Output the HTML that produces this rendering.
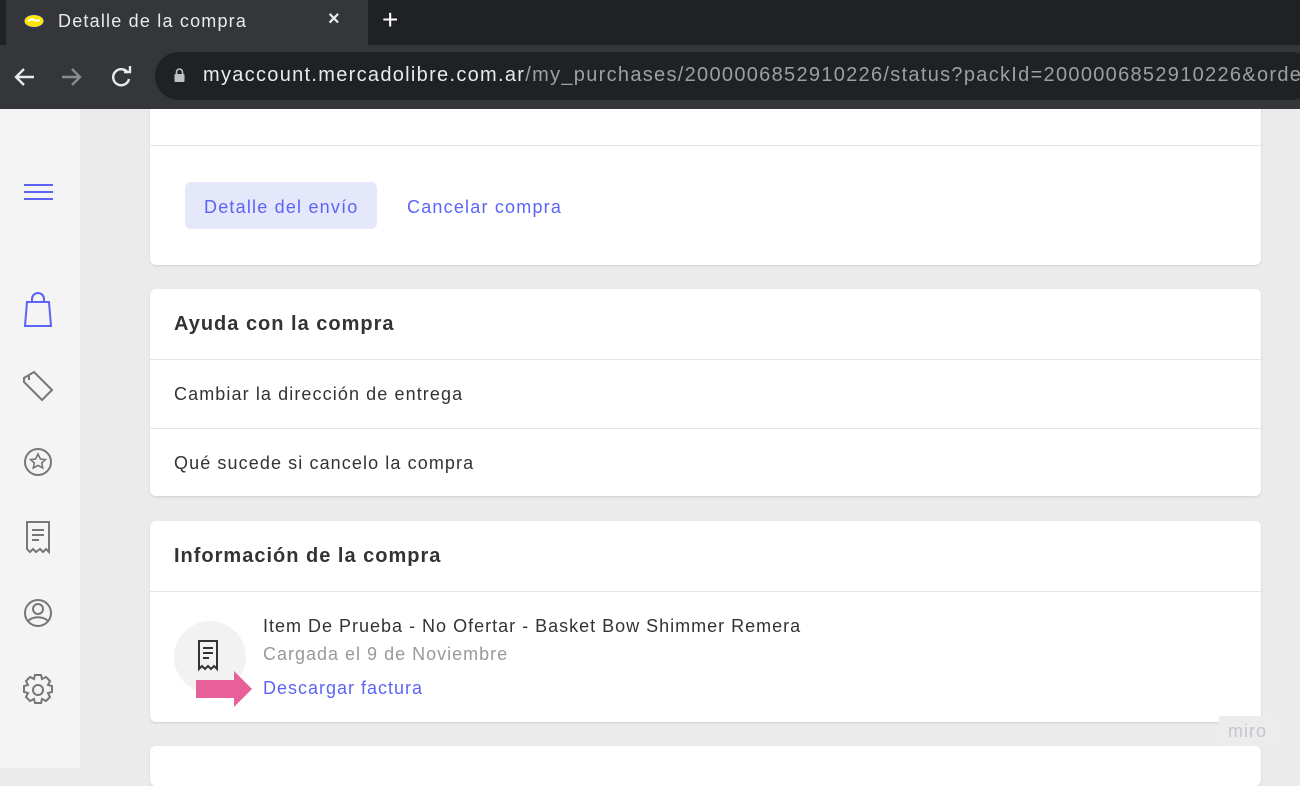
<!DOCTYPE html>
<html><head><meta charset="utf-8"><style>
*{margin:0;padding:0;box-sizing:border-box}
body{width:1300px;height:768px;overflow:hidden;background:#ebebeb;font-family:"Liberation Sans",sans-serif;position:relative}
.tabbar{position:absolute;left:0;top:0;width:1300px;height:45px;background:#202124;z-index:5}
.tab{position:absolute;left:6px;top:0;width:362px;height:45px;background:#35363a;z-index:5}
.toolbar{position:absolute;left:0;top:45px;width:1300px;height:64px;background:#35363a;z-index:5}
.omni{position:absolute;left:155px;top:52px;width:1160px;height:48px;background:#202124;border-radius:24px;z-index:6}
.hi{z-index:7!important}
.side{position:absolute;left:0;top:109px;width:80px;height:659px;background:#f4f4f4}
.card{position:absolute;left:150px;width:1111px;background:#fff;border-radius:6px;box-shadow:0 1px 2px rgba(0,0,0,.12)}
.t{position:absolute;color:#333;white-space:nowrap;letter-spacing:1px}
.hr{position:absolute;left:0;right:0;height:1px;background:#e5e5e5}
</style></head><body>
<div class="tabbar"></div>
<div class="tab"></div>
<svg class="hi" style="position:absolute;left:22px;top:12px;z-index:7" width="24" height="18"><ellipse cx="12" cy="9" rx="11" ry="7.5" fill="#2d3277"/><ellipse cx="12" cy="9" rx="9.5" ry="6" fill="#ffe600"/><path d="M6 9 L10 7 L14 9 L18 8" stroke="#fff" stroke-width="2" fill="none"/></svg>
<div class="t hi" style="left:58px;top:11px;font-size:18px;color:#e8eaed;letter-spacing:1.2px">Detalle de la compra</div>
<div class="t hi" style="left:328px;top:8px;font-size:20px;color:#e8eaed;font-weight:bold">×</div>
<div class="t hi" style="left:382px;top:4px;font-size:28px;color:#fff">+</div>
<div class="toolbar"></div>
<div class="omni"></div>
<svg class="hi" style="position:absolute;left:12px;top:64px;z-index:7" width="130" height="26" fill="none" stroke-width="2.4">
<path d="M22 13H4M12 5L4 13L12 21" stroke="#e8eaed"/>
<path d="M50 13H68M60 5L68 13L60 21" stroke="#8a8b8e"/>
<path d="M116 9A8 8 0 1 0 117 15" stroke="#e8eaed"/><path d="M112 8h6v-6" stroke="#e8eaed"/>
</svg>
<svg style="position:absolute;left:173px;top:67px;z-index:7" width="13" height="16"><path d="M3.5 7V5a3 3 0 0 1 6 0v2" stroke="#bdc1c6" stroke-width="1.6" fill="none"/><rect x="1.5" y="7" width="10" height="8" rx="1" fill="#bdc1c6"/></svg>
<div class="t hi" style="left:203px;top:64px;font-size:20px;color:#e8eaed;letter-spacing:1.3px">myaccount.mercadolibre.com.ar<span style="color:#9aa0a6">/my_purchases/2000006852910226/status?packId=2000006852910226&amp;orde</span></div>
<div class="side"></div>
<svg style="position:absolute;left:0;top:170px" width="80" height="550" fill="none" stroke-width="2">
<path d="M24 15h29M24 22h29M24 29h29" stroke="#5b64f5"/>
<path d="M27 132h22l2 24h-26zM32 132v-3a6 6 0 0 1 12 0v3" stroke="#5b64f5"/>
<path d="M24 208l10-6 18 18-10 10-18-18zM29 206v4" stroke="#777"/>
<circle cx="38" cy="292" r="13" stroke="#777"/><path d="M38 284l2.4 5 5 .6-3.7 3.4 1 5-4.7-2.6-4.7 2.6 1-5-3.7-3.4 5-.6z" stroke="#777" stroke-width="1.6"/>
<path d="M27 352h22v30l-3-3-3 3-3-3-4 3-3-3-3 3-3-3z M32 360h12M32 365h12M32 370h7" stroke="#777"/>
<circle cx="38" cy="443" r="13" stroke="#777"/><circle cx="38" cy="439" r="5" stroke="#777"/><path d="M28 451c5-5 15-5 20 0" stroke="#777"/>
<circle cx="38" cy="520" r="5" stroke="#777"/><path d="M35 505h6l1 4 4-2 4 4-2 4 4 1v6l-4 1 2 4-4 4-4-2-1 4h-6l-1-4-4 2-4-4 2-4-4-1v-6l4-1-2-4 4-4 4 2z" stroke="#777"/>
</svg>

<div class="card" style="top:100px;height:165px">
<div class="hr" style="top:45px"></div>
<div style="position:absolute;left:35px;top:82px;width:192px;height:47px;background:#e5e7fb;border-radius:6px"></div>
<div class="t" style="left:54px;top:97px;font-size:18px;color:#5b64f5;letter-spacing:1.2px">Detalle del envío</div>
<div class="t" style="left:257px;top:97px;font-size:18px;color:#5b64f5;letter-spacing:1.2px">Cancelar compra</div>
</div>

<div class="card" style="top:289px;height:207px">
<div class="t" style="left:24px;top:24px;font-size:20px;font-weight:bold;color:#333">Ayuda con la compra</div>
<div class="hr" style="top:70px"></div>
<div class="t" style="left:24px;top:95px;font-size:18px;letter-spacing:1.1px">Cambiar la dirección de entrega</div>
<div class="hr" style="top:139px"></div>
<div class="t" style="left:24px;top:164px;font-size:18px;letter-spacing:1.1px">Qué sucede si cancelo la compra</div>
</div>

<div class="card" style="top:521px;height:201px">
<div class="t" style="left:24px;top:24px;font-size:20px;font-weight:bold;color:#333">Información de la compra</div>
<div class="hr" style="top:70px"></div>
<div style="position:absolute;left:24px;top:100px;width:72px;height:72px;border-radius:50%;background:#f2f2f2"></div>
<svg style="position:absolute;left:46px;top:118px" width="26" height="34" fill="none" stroke="#333" stroke-width="2"><path d="M3 2h18v28l-3-3-3 3-3-3-3 3-3-3-3 3z M7 9h10M7 14h10M7 19h6"/></svg>
<div class="t" style="left:113px;top:95px;font-size:18px;color:#333">Item De Prueba - No Ofertar - Basket Bow Shimmer Remera</div>
<div class="t" style="left:113px;top:123px;font-size:18px;color:#999">Cargada el 9 de Noviembre</div>
<div class="t" style="left:113px;top:157px;font-size:18px;color:#5b64f5">Descargar factura</div>
<svg style="position:absolute;left:46px;top:150px" width="58" height="36"><path d="M0 9h38V0l18 18-18 18v-9H0z" fill="#e8609a"/></svg>
</div>

<div class="card" style="top:746px;height:40px"></div>
<div style="position:absolute;left:1219px;top:716px;width:60px;height:30px;background:#ececec"></div>
<div class="t" style="left:1228px;top:721px;font-size:18px;color:#c4c4d0;letter-spacing:1px">miro</div>
</body></html>
